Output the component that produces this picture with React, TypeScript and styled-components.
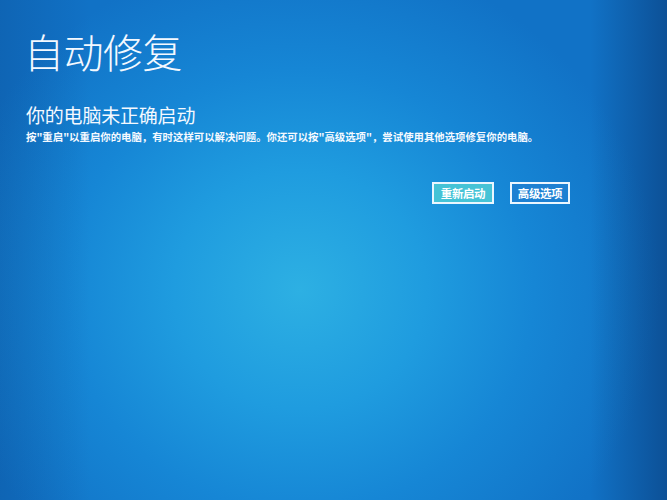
import React from "react";
import styled, { createGlobalStyle } from "styled-components";

const Global = createGlobalStyle`
  html, body { margin: 0; padding: 0; }
  body { width: 667px; height: 500px; overflow: hidden; }
`;

const Screen = styled.div`
  width: 667px;
  height: 500px;
  box-sizing: border-box;
  padding: 26px 0 0 24px;
  font-family: "Noto Sans CJK SC", "Noto Sans", sans-serif;
  color: #f4f9ff;
  background:
    linear-gradient(to right, rgba(0,0,0,0) 0, rgba(0,0,0,0) 590px, rgba(5,30,80,0.4) 667px),
    linear-gradient(to right, rgba(5,40,100,0.18) 0, rgba(0,0,0,0) 90px),
    radial-gradient(ellipse 360px 340px at 300px 290px, #2db0e3 0%, #1f9cdf 35%, #1686d5 65%, #1172c6 100%);
  background-color: #1172c6;
  display: flex;
  flex-direction: column;
`;

const Title = styled.h1`
  margin: 0;
  font-size: 40px;
  line-height: 50px;
  font-weight: 300;
  letter-spacing: -0.5px;
`;

const Subtitle = styled.h2`
  margin: 27px 0 0 2px;
  font-size: 19px;
  line-height: 24px;
  font-weight: 400;
  letter-spacing: -0.2px;
`;

const Body = styled.p`
  margin: 3px 0 0 2px;
  font-size: 10.4px;
  line-height: 14px;
  font-weight: 700;
  letter-spacing: 0px;
  white-space: nowrap;
`;

const Actions = styled.div`
  display: flex;
  justify-content: flex-end;
  gap: 16px;
  margin-top: 38px;
  padding-right: 97px;
`;

const Btn = styled.button<{ $primary?: boolean }>`
  box-sizing: border-box;
  height: 22px;
  width: ${(p) => (p.$primary ? "62px" : "60px")};
  padding: 0;
  border: 2px solid #eaf6ff;
  background: ${(p) => (p.$primary ? "#45c3d6" : "#1c80d2")};
  color: #ffffff;
  font-family: "Noto Sans CJK SC", sans-serif;
  font-size: 11.5px;
  font-weight: 700;
  line-height: 18px;
  letter-spacing: -0.4px;
`;

export default function App() {
  return (
    <>
      <Global />
      <Screen>
        <Title>自动修复</Title>
        <Subtitle>你的电脑未正确启动</Subtitle>
        <Body>按"重启"以重启你的电脑，有时这样可以解决问题。你还可以按"高级选项"，尝试使用其他选项修复你的电脑。</Body>
        <Actions>
          <Btn $primary>重新启动</Btn>
          <Btn>高级选项</Btn>
        </Actions>
      </Screen>
    </>
  );
}
